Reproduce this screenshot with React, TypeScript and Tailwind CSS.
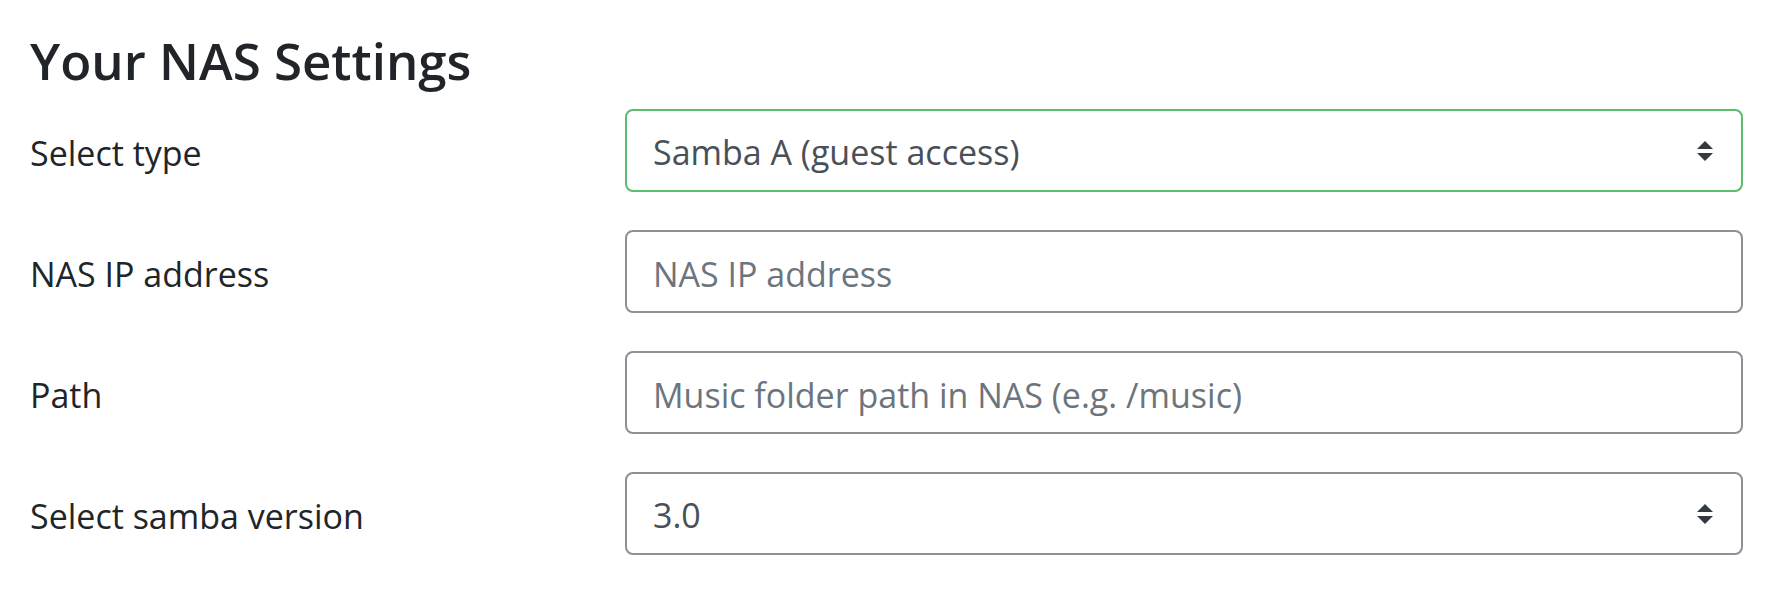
import * as React from "react";

const font = { fontFamily: '"Open Sans", "Noto Sans", sans-serif' };

function Arrows() {
  return (
    <svg
      viewBox="0 0 4 5"
      className="pointer-events-none absolute right-[30px] top-1/2 h-[20px] w-[16px] -translate-y-1/2"
    >
      <path fill="#343a40" d="M2 0L0 2h4zm0 5L0 3h4z" />
    </svg>
  );
}

function Row({ label, children }: { label: string; children: React.ReactNode }) {
  return (
    <div className="grid h-[83px] grid-cols-[595px_1fr] items-center">
      <label className="pt-[4px] text-[34px] leading-none text-[#212529]">{label}</label>
      {children}
    </div>
  );
}

const boxBase =
  "h-[83px] w-full rounded-[8px] border-[2px] bg-white px-[26px] pt-[4px] text-[34px] text-[#495057] outline-none";

export default function App() {
  return (
    <div
      className="h-[608px] w-[1772px] bg-white pl-[30px] pr-[29px] pt-[28px]"
      style={font}
    >
      <h3 className="mb-[16px] text-[51px] font-semibold leading-[65px] text-[#212529]">
        Your NAS Settings
      </h3>
      <div className="flex flex-col gap-[38px]">
        <Row label="Select type">
          <div className="relative">
            <select
              defaultValue="a"
              className={`${boxBase} appearance-none border-[#5cbd6e]`}
            >
              <option value="a">Samba A (guest access)</option>
              <option value="b">Samba B (user access)</option>
            </select>
            <Arrows />
          </div>
        </Row>
        <Row label="NAS IP address">
          <input
            className={`${boxBase} border-[#8b9197] placeholder:text-[#6c757d]`}
            placeholder="NAS IP address"
          />
        </Row>
        <Row label="Path">
          <input
            className={`${boxBase} border-[#8b9197] placeholder:text-[#6c757d]`}
            placeholder="Music folder path in NAS (e.g. /music)"
          />
        </Row>
        <Row label="Select samba version">
          <div className="relative">
            <select
              defaultValue="3.0"
              className={`${boxBase} appearance-none border-[#8b9197]`}
            >
              <option value="1.0">1.0</option>
              <option value="2.0">2.0</option>
              <option value="3.0">3.0</option>
            </select>
            <Arrows />
          </div>
        </Row>
      </div>
    </div>
  );
}
